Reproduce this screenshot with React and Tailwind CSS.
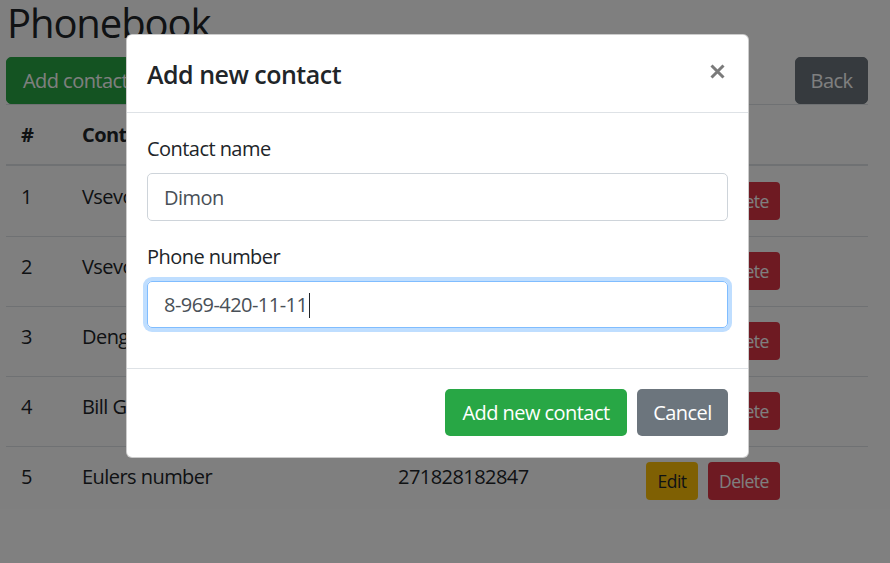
export default function App() {
  const rows = [
    ["1", "Vsevolod Ivanov", "89161234567"],
    ["2", "Vsevolod Petrov", "89031112233"],
    ["3", "Deng Xiaoping", "86101234567"],
    ["4", "Bill Gates", "14255550100"],
    ["5", "Eulers number", "271828182847"],
  ];
  return (
    <div className="relative h-[563px] w-[890px] overflow-hidden bg-white font-['Open_Sans',sans-serif] text-[20px] leading-[30px] tracking-[-0.55px] text-[#212529]">
      <div className="pl-[6px] pr-[22px]">
        <h1 className="m-0 mb-[12px] pl-[1px] text-[40px] font-normal leading-[45px] tracking-[-1.1px]">Phonebook</h1>
        <div className="flex items-center justify-between">
          <button className="h-[47px] rounded-[5px] border border-[#28a745] bg-[#28a745] px-[16px] text-white">Add contact</button>
          <button className="h-[47px] w-[73px] rounded-[5px] border border-[#6c757d] bg-[#6c757d] text-white">Back</button>
        </div>
        <table className="w-full table-fixed border-separate border-spacing-0 text-left">
          <thead>
            <tr>
              <th className="w-[61px] border-t border-b-2 border-[#dee2e6] px-[15px] pt-[15px] pb-[14px] align-bottom font-bold">#</th>
              <th className="w-[316px] border-t border-b-2 border-[#dee2e6] px-[15px] pt-[15px] pb-[14px] align-bottom font-bold">Contact name</th>
              <th className="w-[248px] border-t border-b-2 border-[#dee2e6] px-[15px] pt-[15px] pb-[14px] align-bottom font-bold">Phone number</th>
              <th className="border-t border-b-2 border-[#dee2e6] px-[15px] pt-[15px] pb-[14px] align-bottom font-bold">Actions</th>
            </tr>
          </thead>
          <tbody>
            {rows.map((r, i) => {
              const cls =
                i === 0
                  ? "px-[15px] pt-[16px] pb-[16px] align-top"
                  : "border-t border-[#dee2e6] px-[15px] pt-[15px] pb-[16px] align-top";
              return (
                <tr key={r[0]}>
                  <td className={cls}>{r[0]}</td>
                  <td className={cls}>{r[1]}</td>
                  <td className={cls}>{r[2]}</td>
                  <td className={cls}>
                    <div className="flex h-[38px] gap-[10px]">
                      <button className="h-[38px] w-[52px] rounded-[4px] bg-[#ffc107] text-[17.5px] leading-[26px] tracking-[-0.5px] text-[#212529]">Edit</button>
                      <button className="h-[38px] w-[72px] rounded-[4px] bg-[#dc3545] text-[17.5px] leading-[26px] tracking-[-0.5px] text-white">Delete</button>
                    </div>
                  </td>
                </tr>
              );
            })}
          </tbody>
        </table>
      </div>

      <div className="absolute inset-0 bg-black/50"></div>

      <div className="absolute left-[126px] top-[34px] w-[623px] rounded-[6px] border border-black/20 bg-white">
        <div className="flex h-[78px] items-center justify-between border-b border-[#dee2e6] px-[20px]">
          <h5 className="m-0 h-[37px] pt-[1px] text-[25px] font-semibold leading-[37px] tracking-[-0.5px]">Add new contact</h5>
          <svg width="15" height="15" viewBox="0 0 15 15" className="mr-[3px] mb-[4px]">
            <path d="M1.5 1.5 L13.5 13.5 M13.5 1.5 L1.5 13.5" stroke="#7a7a7a" strokeWidth="3" fill="none" />
          </svg>
        </div>
        <div className="p-[20px]">
          <div className="mb-[20px]">
            <label className="mb-[10px] block h-[30px] pt-[1px] leading-[30px]">Contact name</label>
            <div className="flex h-[48px] items-center rounded-[5px] border border-[#ced4da] px-[16px] pt-[1px] text-[#495057]">Dimon</div>
          </div>
          <div className="mb-[20px]">
            <label className="mb-[10px] block h-[30px] pt-[1px] leading-[30px]">Phone number</label>
            <div className="flex h-[47px] items-center rounded-[5px] border border-[#80bdff] px-[16px] pt-[1px] text-[#495057] shadow-[0_0_0_4px_rgba(0,123,255,0.25)]">
              <span>8-969-420-11-11</span>
              <span className="ml-[2px] h-[25px] w-px bg-[#212529]"></span>
            </div>
          </div>
        </div>
        <div className="flex justify-end gap-[10px] border-t border-[#dee2e6] px-[20px] pt-[20px] pb-[21px]">
          <button className="h-[47px] w-[182px] rounded-[5px] bg-[#28a745] pt-[1px] text-white">Add new contact</button>
          <button className="h-[47px] w-[91px] rounded-[5px] bg-[#6c757d] pt-[1px] text-white">Cancel</button>
        </div>
      </div>
    </div>
  );
}
